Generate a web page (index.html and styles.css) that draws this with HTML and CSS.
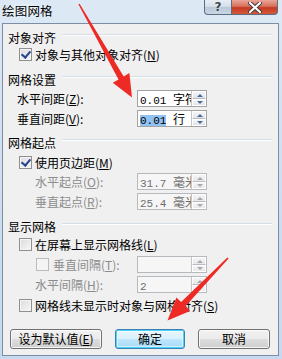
FILE: index.html
```html
<!DOCTYPE html>
<html>
<head>
<meta charset="utf-8">
<link rel="stylesheet" href="styles.css">
</head>
<body>
<div class="window">
  <div class="titlebar">
    <span class="title">绘图网格</span>
    <div class="caption">
      <div class="cbtn help">?</div>
      <div class="cbtn close">
        <svg width="14" height="11" viewBox="0 0 14 11"><path d="M2 1 L12 10 M12 1 L2 10" stroke="#3b3b3b" stroke-width="4" stroke-linecap="round"/><path d="M2 1 L12 10 M12 1 L2 10" stroke="#ffffff" stroke-width="2.2" stroke-linecap="round"/></svg>
      </div>
    </div>
  </div>
  <div class="panel">
    <div class="row head h1"><span>对象对齐</span><i class="rule"></i></div>
    <div class="row cbrow g1"><span class="cb checked"></span><span>对象与其他对象对齐(<u>N</u>)</span></div>

    <div class="row head h2"><span>网格设置</span><i class="rule"></i></div>
    <div class="row field f1"><span class="lbl w120">水平间距(<u>Z</u>):</span>
      <div class="spin"><div class="val"><span class="num">0.01 </span>字符</div><div class="sb"><i class="up"></i><i class="dn"></i></div></div></div>
    <div class="row field f2"><span class="lbl w120">垂直间距(<u>V</u>):</span>
      <div class="spin"><div class="val"><span class="num sel">0.01</span><span class="num"> </span>行</div><div class="sb"><i class="up"></i><i class="dn"></i></div></div></div>

    <div class="row head h3"><span>网格起点</span><i class="rule"></i></div>
    <div class="row cbrow g2"><span class="cb checked"></span><span>使用页边距(<u>M</u>)</span></div>
    <div class="row field f3 dis"><span class="lbl w102">水平起点(<u>O</u>):</span>
      <div class="spin off"><div class="val"><span class="num">31.7 </span>毫米</div><div class="sb"><i class="up"></i><i class="dn"></i></div></div></div>
    <div class="row field f4 dis"><span class="lbl w102">垂直起点(<u>R</u>):</span>
      <div class="spin off"><div class="val"><span class="num">25.4 </span>毫米</div><div class="sb"><i class="up"></i><i class="dn"></i></div></div></div>

    <div class="row head h4"><span>显示网格</span><i class="rule"></i></div>
    <div class="row cbrow g3"><span class="cb"></span><span>在屏幕上显示网格线(<u>L</u>)</span></div>
    <div class="row field f5 dis"><span class="lbl w101"><span class="cb off"></span>垂直间隔(<u>T</u>):</span>
      <div class="spin off"><div class="val"></div><div class="sb"><i class="up"></i><i class="dn"></i></div></div></div>
    <div class="row field f6 dis"><span class="lbl w102">水平间隔(<u>H</u>):</span>
      <div class="spin off"><div class="val"><span class="num">2</span></div><div class="sb"><i class="up"></i><i class="dn"></i></div></div></div>
    <div class="row cbrow g4"><span class="cb"></span><span>网格线未显示时对象与网格对齐(<u>S</u>)</span></div>

    <div class="buttons">
      <div class="btn b1">设为默认值(<u>E</u>)</div>
      <div class="btn b2 default">确定</div>
      <div class="btn b3">取消</div>
    </div>
  </div>

  <svg class="arrows" width="282" height="359" viewBox="0 0 282 359">
    <polygon fill="#ee2a24" points="78.4,4.3 118.5,79.4 112.8,82.8 132,97.5 129.4,73.1 123.7,76.4 79.6,3.7"/>
    <polygon fill="#ee2a24" points="227.4,257.6 181.1,302.1 176.4,297.6 167.5,320.5 190.2,310.9 185.5,306.3 228.6,258.4"/>
  </svg>
</div>
</body>
</html>
```

FILE: styles.css
```css
* { box-sizing: border-box; }
body {
  margin: 0;
  font-family: "Noto Sans CJK SC", "Noto Sans", sans-serif;
  font-size: 12px;
  color: #000;
}
u { text-decoration: underline; }

.window {
  position: relative;
  width: 282px;
  height: 359px;
  overflow: hidden;
  background: linear-gradient(180deg, #dde9f5 0%, #cfe0f1 40%, #c6d9ee 100%);
}

.titlebar {
  height: 23px;
  display: flex;
  align-items: flex-start;
}
.title {
  margin: 2px 0 0 2px;
  font-size: 12.5px;
  line-height: 17px;
  letter-spacing: 0.2px;
  background: radial-gradient(ellipse at center, rgba(255,255,255,0.7), rgba(255,255,255,0) 70%);
}
.caption {
  margin-left: auto;
  margin-right: 4px;
  display: flex;
}
.cbtn {
  height: 15px;
  border: 1px solid #5d6c80;
  border-top: none;
  display: flex;
  align-items: center;
  justify-content: center;
}
.help {
  width: 28px;
  border-radius: 0 0 0 4px;
  background: linear-gradient(180deg, #e8eef5 0%, #d2dce8 50%, #b9c7d6 51%, #c9d6e4 100%);
  font-family: "DejaVu Sans", sans-serif;
  font-weight: bold;
  font-size: 12px;
  color: #3b4451;
  line-height: 14px;
  text-shadow: 0 0 2px #fff;
}
.close {
  width: 46px;
  border-left: none;
  border-radius: 0 0 4px 0;
  background: linear-gradient(180deg, #e9a596 0%, #d7705c 45%, #c53a22 55%, #d45a3a 100%);
}

.panel {
  margin-left: 2px;
  width: 277px;
  height: 333px;
  background: #f0f0f0;
  border: 1px solid #7c8ea3;
  padding: 5px 0 0 0;
}

.row {
  height: 17px;
  display: flex;
  align-items: center;
  line-height: 17px;
  white-space: nowrap;
}

.head { padding-left: 5px; padding-right: 6px; }
.rule {
  flex: 1;
  margin-left: 6px;
  margin-top: -5px;
  height: 2px;
  border-top: 1px solid #d5dde6;
  border-bottom: 1px solid #ffffff;
}

.cbrow { padding-left: 16px; }
.cb {
  flex: none;
  width: 13px;
  height: 13px;
  margin-right: 3px;
  border: 1px solid #8e8f8f;
  background: linear-gradient(135deg, #dcdcdc 0%, #f6f6f6 100%);
  box-shadow: inset 0 0 0 1px #f4f4f4;
  position: relative;
}
.cb.checked::after {
  content: "";
  position: absolute;
  left: 3px;
  top: 0px;
  width: 4px;
  height: 7px;
  border-right: 2px solid #25468e;
  border-bottom: 2px solid #25468e;
  transform: rotate(40deg);
}
.cb.off {
  border-color: #bcbcbc;
  background: #f4f4f4;
  box-shadow: none;
  margin-right: 4px;
}

.field .lbl { display: flex; align-items: center; flex: none; }
.f1, .f2 { padding-left: 14px; }
.f3, .f4, .f6 { padding-left: 32px; }
.f5 { padding-left: 33px; }
.w120 { width: 120px; }
.w102 { width: 102px; }
.w101 { width: 101px; }
.dis { color: #8c8c8c; }

.spin {
  flex: none;
  width: 70px;
  height: 17px;
  border: 1px solid #a3a3a3;
  background: #fff;
  display: flex;
  color: #000;
}
.spin .val {
  flex: 1;
  overflow: hidden;
  white-space: nowrap;
  padding-left: 2px;
  line-height: 15px;
  font-size: 12px;
}
.num {
  font-family: "Liberation Mono", monospace;
  font-size: 11px;
  white-space: pre;
}
.sel { background: #90c2f2; }
.sb {
  width: 15px;
  flex: none;
  display: flex;
  flex-direction: column;
  border-left: 1px solid #c6c6c6;
}
.sb i {
  flex: 1;
  position: relative;
  background: linear-gradient(180deg, #f4f6f8, #dfe4ea);
  border: 1px solid #ffffff;
}
.sb i.up { border-bottom: 1px solid #b8bcc2; }
.sb i::after {
  content: "";
  position: absolute;
  left: 4px;
  top: 2px;
  border-left: 3px solid transparent;
  border-right: 3px solid transparent;
}
.sb i.up::after { border-bottom: 3px solid #4c6b93; }
.sb i.dn::after { border-top: 3px solid #4c6b93; top: 1px; }

.spin.off { background: #f6f6f6; border-color: #b6b9bd; color: #6d6d6d; }
.spin.off .sb i { background: linear-gradient(180deg, #f4f4f4, #e8e8e8); }
.spin.off .sb i.up::after { border-bottom-color: #a8a8a8; }
.spin.off .sb i.dn::after { border-top-color: #a8a8a8; }

/* vertical rhythm */
.g1 { margin-top: 0; }
.h2 { margin-top: 8px; }
.f1 { margin-top: 2px; }
.f2 { margin-top: 3px; }
.h3 { margin-top: 7px; }
.g2 { margin-top: 3px; }
.f3 { margin-top: 2px; }
.f4 { margin-top: 3px; }
.h4 { margin-top: 8px; }
.g3 { margin-top: 1px; }
.f5 { margin-top: 3px; }
.f6 { margin-top: 3px; }
.g4 { margin-top: 4px; }

.buttons {
  margin-top: 15px;
  padding-left: 7px;
  display: flex;
  gap: 13px;
}
.btn {
  height: 20px;
  border: 1px solid #707070;
  border-radius: 3px;
  background: linear-gradient(180deg, #f2f2f2 0%, #ebebeb 48%, #dddddd 52%, #cfcfcf 100%);
  box-shadow: inset 0 0 0 1px rgba(255,255,255,0.8);
  display: flex;
  align-items: center;
  justify-content: center;
  line-height: 18px;
}
.b1 { width: 92px; }
.b2 { width: 70px; }
.b3 { width: 72px; }
.btn.default {
  border-color: #3c7fb1;
  box-shadow: inset 0 0 0 1px #48d3fb, inset 0 0 0 2px rgba(255,255,255,0.5);
  background: linear-gradient(180deg, #eaf6fd 0%, #d9f0fc 48%, #bee6fd 52%, #a7d9f5 100%);
}

.arrows {
  position: absolute;
  left: 0;
  top: 0;
  pointer-events: none;
}
```
